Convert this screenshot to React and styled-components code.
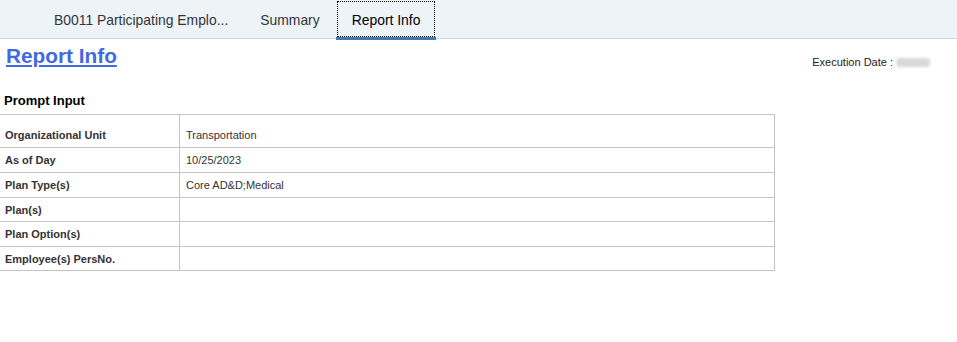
import styled, { createGlobalStyle } from 'styled-components'

const GlobalStyle = createGlobalStyle`
  body {
    margin: 0;
    background: #ffffff;
    font-family: "Liberation Sans", Arial, sans-serif;
  }
`

const TabBar = styled.div`
  display: flex;
  align-items: stretch;
  height: 38px;
  padding-left: 38px;
  background: #eef3f8;
  border-bottom: 1px solid #c8d7e6;
`

const Tab = styled.div`
  position: relative;
  display: flex;
  align-items: center;
  padding: 2px 16px 0;
  font-size: 13.9px;
  color: ${props => (props.active ? '#000000' : '#32363a')};
  outline: ${props => (props.active ? '1px dotted #000' : 'none')};
  outline-offset: -2px;

  &::after {
    content: '';
    display: ${props => (props.active ? 'block' : 'none')};
    position: absolute;
    left: 0;
    right: 0;
    bottom: -2px;
    height: 3px;
    background: #427cac;
  }
`

const Header = styled.div`
  display: flex;
  justify-content: space-between;
  align-items: flex-start;
  padding: 5px 27px 0 6px;
  height: 27px;
`

const Title = styled.a`
  font-family: "Liberation Sans", Arial, sans-serif;
  font-size: 20.8px;
  font-weight: bold;
  color: #4169e1;
  text-decoration: underline;
  line-height: 24px;
  cursor: pointer;
`

const ExecDate = styled.div`
  display: flex;
  align-items: center;
  gap: 3px;
  font-size: 11px;
  color: #222;
  margin-top: 12px;
`

const Blur = styled.span`
  display: inline-block;
  width: 34px;
  height: 9px;
  border-radius: 4px;
  background: #d8d8d8;
  filter: blur(1.5px);
`

const Section = styled.div`
  padding: 22px 0 0 4px;
  font-size: 13px;
  font-weight: bold;
  color: #000;
  height: 21px;
`

const Table = styled.table`
  border-collapse: collapse;
  width: 775px;
  font-size: 11px;
  color: #333;
`

const Row = styled.tr`
  height: ${props => props.h}px;
`

const Label = styled.td`
  width: 174px;
  border: 1px solid #c4c4c4;
  border-left: none;
  padding: ${props => (props.first ? '7px 0 0 5px' : '0 0 0 5px')};
  font-weight: bold;
  color: #333;
`

const Value = styled.td`
  border: 1px solid #c4c4c4;
  padding: ${props => (props.first ? '7px 0 0 6px' : '0 0 0 6px')};
  color: #333;
`

const rows = [
  ['Organizational Unit', 'Transportation', 33],
  ['As of Day', '10/25/2023', 25],
  ['Plan Type(s)', 'Core AD&D;Medical', 25],
  ['Plan(s)', '', 24],
  ['Plan Option(s)', '', 25],
  ['Employee(s) PersNo.', '', 24]
]

const App = () => (
  <>
    <GlobalStyle />
    <TabBar>
      <Tab>B0011 Participating Emplo...</Tab>
      <Tab>Summary</Tab>
      <Tab active>Report Info</Tab>
    </TabBar>
    <Header>
      <Title>Report Info</Title>
      <ExecDate>
        Execution Date : <Blur />
      </ExecDate>
    </Header>
    <Section>Prompt Input</Section>
    <Table>
      <tbody>
        {rows.map(([label, value, h], i) => (
          <Row key={label} h={h}>
            <Label first={i === 0}>{label}</Label>
            <Value first={i === 0}>{value}</Value>
          </Row>
        ))}
      </tbody>
    </Table>
  </>
)

export default App
